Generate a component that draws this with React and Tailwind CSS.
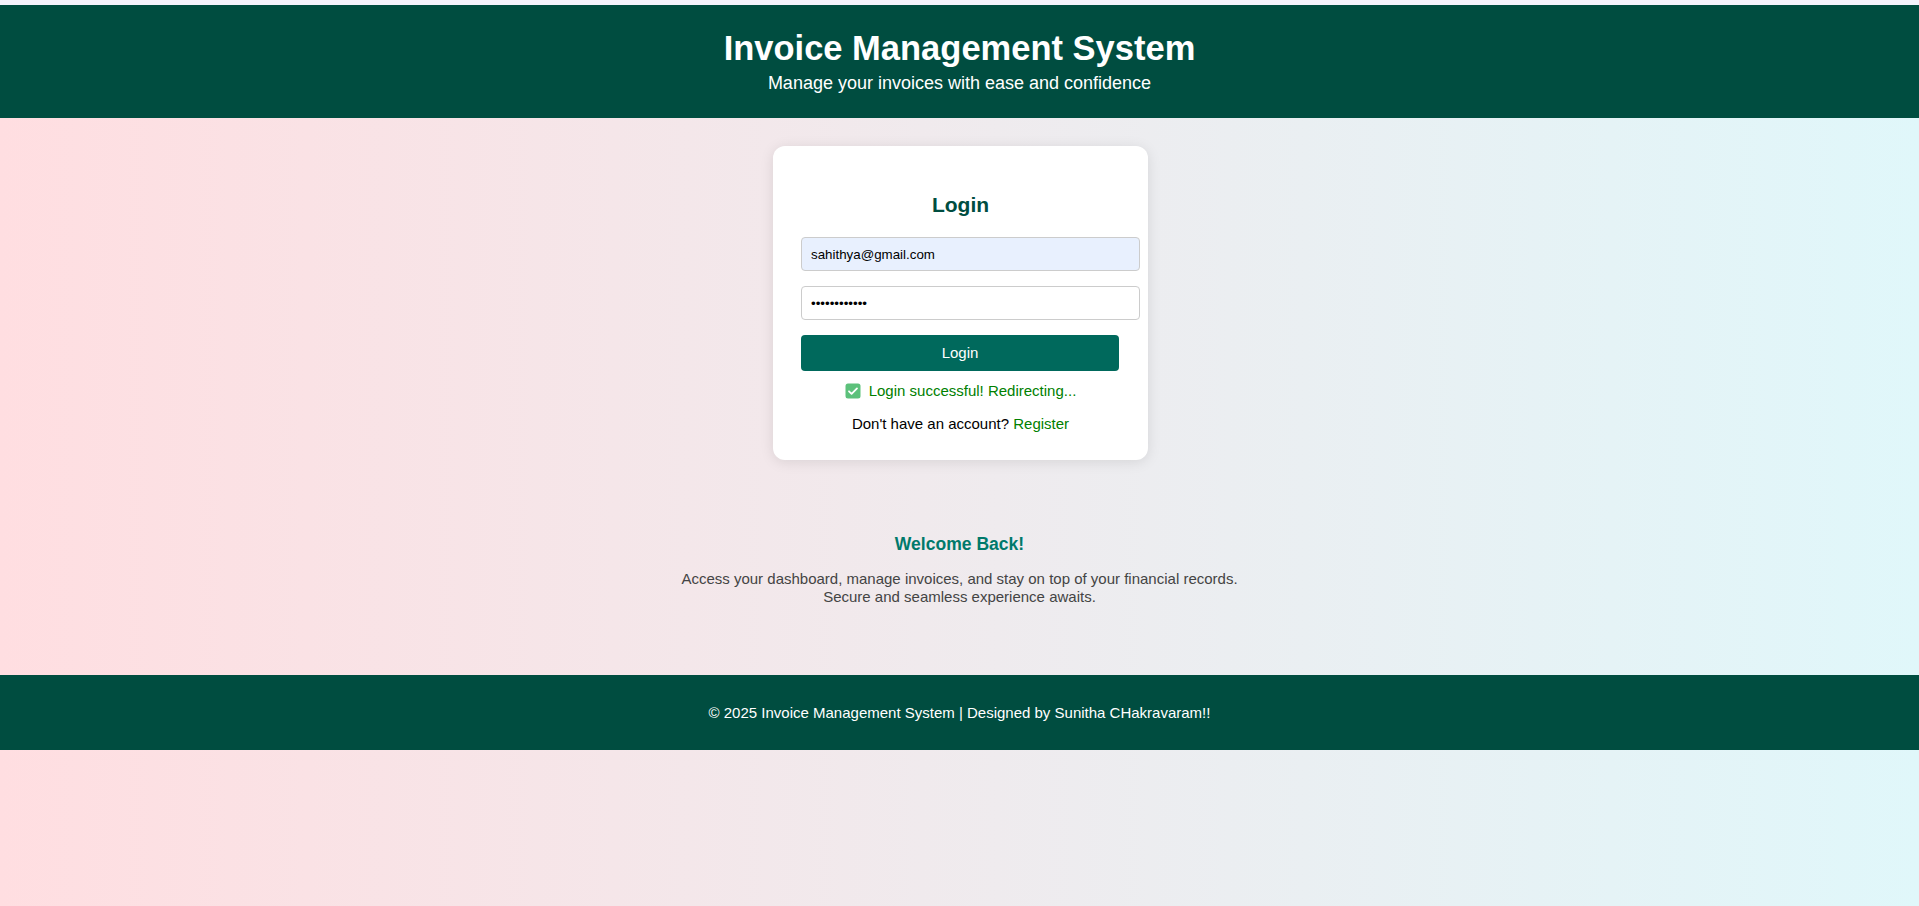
import React from "react";

const CheckEmoji = () => (
  <svg width="16" height="16" viewBox="0 0 16 16" className="inline-block">
    <rect x="0.5" y="0.5" width="15" height="15" rx="2.5" fill="#5cc17b" />
    <path d="M4 8.3l2.6 2.6L12 5.4" fill="none" stroke="#ffffff" strokeWidth="1.8" strokeLinecap="round" strokeLinejoin="round" />
  </svg>
);

const App = () => {
  return (
    <div
      className="min-h-screen w-full bg-[linear-gradient(to_right,#ffdee1,#e0f7fa)] text-[15px]"
      style={{ fontFamily: '"Liberation Sans", Arial, sans-serif' }}
    >
      <div className="h-[5px] bg-[#f4f4fc]" />

      <header className="h-[113px] bg-[#004d40] text-white flex flex-col items-center">
        <h1 className="mt-[23px] text-[34.5px] leading-[40px] font-bold">Invoice Management System</h1>
        <p className="mt-[5px] text-[18px] leading-[21px]">Manage your invoices with ease and confidence</p>
      </header>

      <main className="flex flex-col items-center">
        <div className="mt-[28px] ml-[2px] w-[375px] rounded-[12px] bg-white pl-[28px] pt-[47px] pb-[28px] shadow-[0_2px_14px_rgba(0,0,0,0.1)]">
          <h2 className="-ml-[28px] text-center text-[21px] leading-[24px] font-bold text-[#004d40]">Login</h2>

          <input
            type="email"
            readOnly
            value="sahithya@gmail.com"
            className="mt-[20px] block h-[34px] w-[339px] rounded-[4px] border border-[#cccccc] bg-[#e8f0fe] px-[9px] text-[13.33px] text-black outline-none"
            style={{ fontFamily: '"Liberation Sans", Arial, sans-serif' }}
          />
          <input
            type="password"
            readOnly
            value="sahithya1234"
            className="mt-[15px] block h-[34px] w-[339px] rounded-[4px] border border-[#cccccc] bg-white px-[9px] text-[13.33px] text-black outline-none"
            style={{ fontFamily: '"Liberation Sans", Arial, sans-serif' }}
          />

          <button className="mt-[15px] block h-[36px] w-[318px] rounded-[4px] bg-[#00695c] text-[15px] text-white">
            Login
          </button>

          <p className="-ml-[28px] mt-[11px] flex items-center justify-center gap-[8px] leading-[17px] text-[#008000]">
            <CheckEmoji />
            <span>Login successful! Redirecting...</span>
          </p>

          <p className="-ml-[28px] mt-[16px] text-center leading-[17px] text-black">
            Don't have an account? <a className="text-[#008000]">Register</a>
          </p>
        </div>

        <section className="mt-[74px] flex flex-col items-center text-center">
          <h3 className="text-[17.55px] leading-[20px] font-bold text-[#00796b]">Welcome Back!</h3>
          <p className="mt-[16px] leading-[18px] text-[#444444]">
            Access your dashboard, manage invoices, and stay on top of your financial records.
            <br />
            Secure and seamless experience awaits.
          </p>
        </section>
      </main>

      <footer className="mt-[69px] h-[75px] bg-[#004d40] text-white flex items-center justify-center">
        <p className="leading-[17px]">© 2025 Invoice Management System | Designed by Sunitha CHakravaram!!</p>
      </footer>
    </div>
  );
};

export default App;
